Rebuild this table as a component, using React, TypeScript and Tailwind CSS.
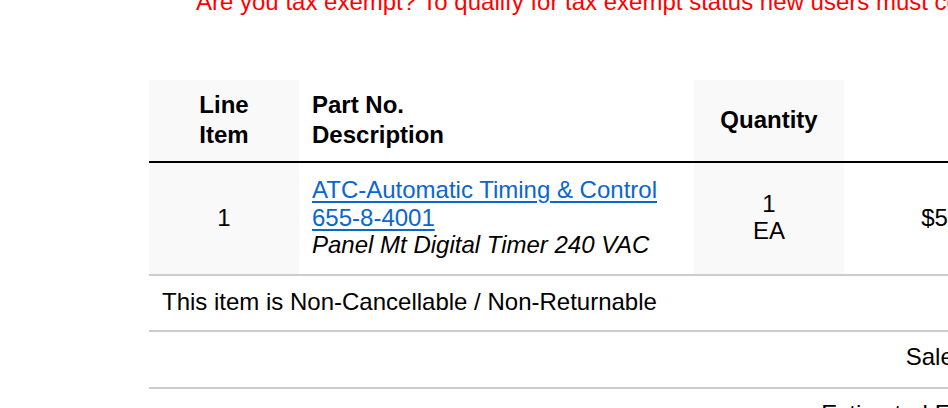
import React from 'react';

const cellBase = 'px-[13px] align-middle';

export default function App() {
  return (
    <div className="w-[948px] h-[408px] overflow-hidden bg-white text-[24px] text-black" style={{ fontFamily: '"Liberation Sans", Arial, sans-serif' }}>
      <div className="pl-[149px]">
        <p className="ml-[47px] -mt-[12px] leading-[27.5px] whitespace-nowrap text-[#ff0000]">
          Are you tax exempt? To qualify for tax exempt status new users must contact customer service.
        </p>

        <table className="mt-[64.5px] w-[880px] table-fixed border-collapse">
          <colgroup>
            <col className="w-[150px]" />
            <col className="w-[395px]" />
            <col className="w-[150px]" />
            <col className="w-[185px]" />
          </colgroup>
          <thead>
            <tr className="border-b-2 border-black font-bold leading-[30px]">
              <th className={`${cellBase} pt-[10px] pb-[11px] bg-[#f9f9f9] text-center`}>Line<br />Item</th>
              <th className={`${cellBase} pt-[10px] pb-[11px] text-left`}>Part No.<br />Description</th>
              <th className={`${cellBase} pt-[10px] pb-[11px] bg-[#f9f9f9] text-center`}>Quantity</th>
              <th className={`${cellBase} pt-[10px] pb-[11px]`}></th>
            </tr>
          </thead>
          <tbody className="leading-[27.5px]">
            <tr className="border-b-2 border-[#cccccc]">
              <td className={`${cellBase} pt-[13px] pb-[15px] bg-[#f9f9f9] text-center`}>1</td>
              <td className={`${cellBase} pt-[13px] pb-[15px]`}>
                <a href="#" className="text-[#0a66d0] underline underline-offset-[3px]">ATC-Automatic Timing &amp; Control</a>
                <br />
                <a href="#" className="text-[#0a66d0] underline underline-offset-[3px]">655-8-4001</a>
                <br />
                <span className="italic">Panel Mt Digital Timer 240 VAC</span>
              </td>
              <td className={`${cellBase} pt-[13px] pb-[15px] bg-[#f9f9f9] text-center`}>1<br />EA</td>
              <td className={`pl-[13px] pr-[21px] pt-[13px] pb-[15px] align-middle text-right`}>$546.20</td>
            </tr>
            <tr className="border-b-2 border-[#cccccc]">
              <td colSpan={4} className={`${cellBase} pt-[12px] pb-[15px] text-left`}>
                This item is Non-Cancellable / Non-Returnable
              </td>
            </tr>
            <tr className="border-b-2 border-[#cccccc]">
              <td colSpan={4} className={`${cellBase} pt-[11px] pb-[16px] text-right`}>Sales Tax:</td>
            </tr>
            <tr>
              <td colSpan={4} className={`${cellBase} pt-[11px] pb-[16px] text-right`}>Estimated Freight:</td>
            </tr>
          </tbody>
        </table>
      </div>
    </div>
  );
}
